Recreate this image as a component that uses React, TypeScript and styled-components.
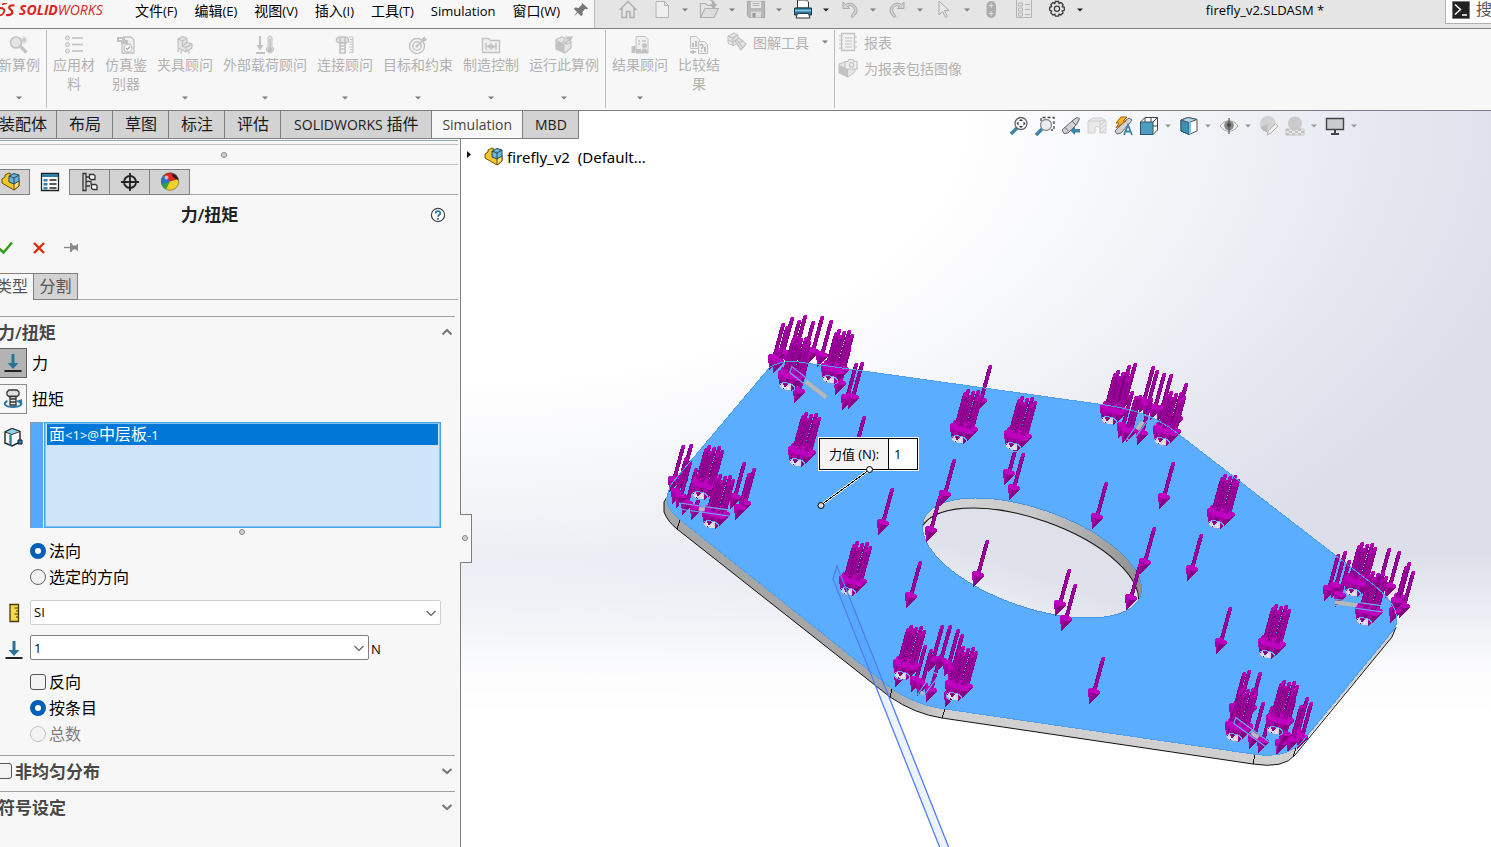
import React, { ReactNode } from "react";
import styled, { createGlobalStyle, css } from "styled-components";

const LINE = "#808080";
const FACE = "#f7f7f7";
const TAB = "#d3d3d3";

const GlobalStyle = createGlobalStyle`
  *, *::before, *::after { box-sizing: border-box; }
  body {
    margin: 0;
    font-family: "Open Sans", "Noto Sans CJK SC", sans-serif;
    font-size: 14px;
    line-height: 19px;
    color: #000;
  }
  button, input, select { font: inherit; color: inherit; }
  button { border: 0; padding: 0; background: none; }
  svg { display: block; flex: none; }
`;

const Page = styled.div`
  display: flex;
  flex-direction: column;
  min-height: 100vh;
  overflow: hidden;
`;

/* Latin runs are set slightly smaller than the Chinese text beside them */
const Latin = styled.span<{ $size?: number }>`
  font-size: ${(p) => p.$size ?? 13}px;
`;

/* ---------- title bar ---------- */

const TitleBar = styled.header`
  display: flex;
  height: 29px;
  background: #e5e5e5;
  border-bottom: 1px solid ${LINE};
`;

const MenuBar = styled.nav`
  display: flex;
  align-items: center;
  width: 595px;
  flex: none;
  padding-bottom: 7px;
  background: ${FACE};
  border-right: 1px solid #b8b8b8;
  white-space: nowrap;
`;

const Brand = styled.div`
  display: flex;
  align-items: center;
  gap: 3px;
  width: 135px;
  padding-bottom: 2px;
  color: #d9261c;
  font-style: italic;
  font-size: 14px;
`;

const MenuList = styled.div`
  display: flex;
  gap: 17px;
  flex: 1;
`;

const MenuButton = styled.button`
  line-height: 22px;
`;

const PinButton = styled.button`
  width: 21px;
  padding-bottom: 2px;
`;

const QuickBar = styled.div`
  display: flex;
  align-items: center;
  gap: 9px;
  padding: 0 0 9px 23px;
`;

const IconButton = styled.button<{ $after?: number }>`
  width: 20px;
  height: 20px;
  margin-right: ${(p) => p.$after ?? 0}px;
`;

const SplitButton = styled.div`
  display: flex;
  align-items: center;
  gap: 8px;
`;

const DropButton = styled.button`
  width: 10px;
  height: 20px;
`;

const DocTitle = styled.div`
  flex: 1;
  text-align: center;
  font-size: 13px;
  line-height: 20px;
  white-space: nowrap;
`;

const SearchBox = styled.label`
  display: flex;
  align-items: center;
  gap: 6px;
  width: 46px;
  height: 24px;
  padding: 0 0 4px 6px;
  overflow: hidden;
  background: #fff;
  border: 1px solid #b0b0b0;
  border-top: 0;
  border-right: 0;
`;

const SearchInput = styled.input`
  width: 60px;
  flex: none;
  padding: 0;
  border: 0;
  outline: 0;
  font-size: 16px;
  &::placeholder { color: #555; opacity: 1; }
`;

/* ---------- ribbon ---------- */

const Ribbon = styled.div`
  display: flex;
  height: 82px;
  padding-top: 1px;
  background: ${FACE};
  border-bottom: 1px solid ${LINE};
  color: #b2b2b2;
  overflow: hidden;
`;

const RibbonGroup = styled.div<{ $lead?: boolean; $first?: boolean }>`
  display: flex;
  gap: 10px;
  height: 78px;
  flex: none;
  padding: 0 6px;
  border-right: 1px solid #bdbdbd;
  ${(p) => p.$first && css`
    margin-left: -8px;
  `}
  ${(p) => p.$lead && css`
    padding-left: 3px;
    border-right: 0;
  `}
`;

const RibbonItem = styled.button<{ $narrow?: boolean }>`
  display: flex;
  flex-direction: column;
  align-items: center;
  width: ${(p) => (p.$narrow ? "42px" : "auto")};
  padding: 5px 0 7px;
`;

const RibbonLabel = styled.span`
  flex: 1;
`;

const RibbonStack = styled.div<{ $tight?: boolean }>`
  display: flex;
  flex-direction: column;
  gap: 6px;
  padding-top: 2px;
  ${(p) => p.$tight && css`
    margin: 0 -2px 0 -3px;
  `}
`;

const RibbonRow = styled.button`
  display: flex;
  align-items: center;
  gap: 6px;
  height: 20px;
  white-space: nowrap;
`;

const RowDrop = styled.span`
  padding-left: 5px;
`;

/* ---------- workspace ---------- */

const Workspace = styled.main`
  display: flex;
  flex-direction: column;
  flex: 1;
  background:
    linear-gradient(to bottom, rgba(255, 255, 255, 0) 60%, rgba(255, 255, 255, 0.9) 76%, #fff 82%),
    radial-gradient(ellipse 1040px 580px at 480px 0, #fff 46%, #f3f4f8 68%, #e3e6ef 90%, #dcdfea 104%, #dddfea 150%);
`;

const TabStrip = styled.div`
  display: flex;
  align-items: stretch;
  height: 28px;
`;

const CommandTab = styled.button<{ $active?: boolean; $edge?: boolean; $wide?: boolean }>`
  flex: none;
  padding: ${(p) => (p.$wide ? "0 13px" : "0 11px 0 12px")};
  background: ${(p) => (p.$active ? FACE : TAB)};
  border-right: 1px solid ${LINE};
  border-bottom: 1px solid ${LINE};
  font-size: 16px;
  color: #1a1a1a;
  white-space: nowrap;
  ${(p) => p.$edge && css`
    margin-left: -13px;
    padding-right: 9px;
  `}
  ${(p) => p.$active && css`
    padding: 0 10px;
    color: #444;
  `}
`;

const ViewBar = styled.div`
  display: flex;
  align-items: center;
  gap: 6px;
  margin-left: auto;
  padding: 2px 132px 0 0;
`;

const ViewDrop = styled(DropButton)`
  margin-left: -2px;
`;

const Body = styled.div`
  display: flex;
  flex: 1;
`;

/* ---------- property panel ---------- */

const Panel = styled.aside`
  position: relative;
  z-index: 1;
  width: 461px;
  flex: none;
  padding-top: 1px;
  background: ${FACE};
  border-right: 1px solid ${LINE};
`;

const PanelEdge = styled.div`
  height: 1px;
  margin: 0 2px 3px 0;
  background: #8fa9b5;
`;

const Grip = styled.div`
  display: flex;
  justify-content: center;
  align-items: center;
  height: 21px;
  margin-right: 2px;
  padding-right: 10px;
  border: solid #c0c0c0;
  border-width: 1px 0;
`;

const Dot = styled.span`
  width: 6px;
  height: 6px;
  border: 1px solid #8a8a8a;
  border-radius: 50%;
  background: #d0d0d0;
`;

const ManagerTabs = styled.div`
  display: flex;
  height: 26px;
  margin: 4px 2px 0 0;
`;

const ManagerTab = styled.button<{ $active?: boolean; $edge?: boolean }>`
  display: flex;
  align-items: center;
  justify-content: center;
  width: ${(p) => (p.$edge ? 30 : 40)}px;
  padding-right: ${(p) => (p.$edge ? 8 : 0)}px;
  background: ${(p) => (p.$active ? FACE : TAB)};
  border: solid ${LINE};
  border-width: ${(p) => (p.$active ? "0 1px 0 0" : "1px 1px 1px 0")};
`;

const TabFill = styled.div`
  flex: 1;
  border-bottom: 1px solid #a8a8a8;
`;

const PanelTitle = styled.div`
  display: flex;
  align-items: center;
  height: 39px;
  padding-right: 14px;
`;

const PanelName = styled.h2`
  flex: 1;
  margin: 0;
  padding-right: 11px;
  text-align: center;
  font-size: 17px;
  font-weight: 600;
  color: #222;
`;

const ActionRow = styled.div`
  display: flex;
  align-items: center;
  gap: 13px;
  height: 27px;
  margin-left: -4px;
`;

const SubTabs = styled.div`
  display: flex;
  height: 27px;
  margin: 12px 2px 16px 0;
`;

const SubTab = styled.button<{ $active?: boolean }>`
  width: ${(p) => (p.$active ? 34 : 44)}px;
  padding: 0 0 2px;
  font-size: 16px;
  line-height: 22px;
  color: #555;
  text-align: ${(p) => (p.$active ? "right" : "center")};
  background: ${(p) => (p.$active ? FACE : TAB)};
  border: solid ${LINE};
  border-width: ${(p) => (p.$active ? "1px 1px 0 0" : "1px 1px 1px 0")};
  direction: ${(p) => (p.$active ? "rtl" : "ltr")};
  padding-right: ${(p) => (p.$active ? 5 : 0)}px;
  white-space: nowrap;
`;

const Section = styled.section`
  width: 455px;
  border-top: 1px solid #a0a0a0;
`;

const SectionHead = styled.div<{ $after?: number }>`
  display: flex;
  align-items: center;
  justify-content: space-between;
  height: 30px;
  margin-bottom: ${(p) => p.$after ?? 0}px;
  padding-right: 2px;
  overflow: hidden;
`;

const SectionName = styled.label<{ $shift?: number }>`
  display: flex;
  align-items: center;
  gap: 3px;
  margin-left: ${(p) => -(p.$shift ?? 2)}px;
  font-size: 17px;
  font-weight: 600;
  color: #484848;
`;

const ModeRow = styled.label`
  display: flex;
  align-items: center;
  gap: 5px;
  height: 30px;
  margin: 1px 0 6px;
  font-size: 16px;
  line-height: 22px;
`;

const ModeButton = styled.button<{ $on?: boolean }>`
  display: flex;
  align-items: center;
  width: 27px;
  height: 30px;
  padding-left: 3px;
  background: ${(p) => (p.$on ? "#b3b3b3" : FACE)};
  border: 1px solid ${(p) => (p.$on ? "#606060" : "#8c8c8c")};
  border-left: 0;
`;

const SelectionRow = styled.div`
  display: flex;
  height: 106px;
  margin-top: 8px;
  padding-right: 14px;
`;

const SideIcon = styled.span`
  display: flex;
  width: 30px;
  flex: none;
  padding: 5px 0 0 3px;
`;

const ColorBar = styled.span`
  width: 14px;
  background: #54a8ff;
  border: solid #8c9aa8;
  border-width: 1px 0 0 1px;
  border-right: 1px solid #fff;
`;

const SelectionList = styled.ul`
  flex: 1;
  margin: 0;
  padding: 1px;
  list-style: none;
  background: #cfe4f8;
  border: 1px solid #3fa5e3;
  box-shadow: inset 0 0 0 1px #86c2f0;
`;

const SelectionItem = styled.li`
  height: 21px;
  margin: 0 1px;
  padding-left: 2px;
  background: #0078d7;
  color: #fff;
  font-size: 16px;
  line-height: 20px;
`;

const ListGrip = styled.div`
  display: flex;
  justify-content: center;
  height: 10px;
  padding: 1px 0 0 28px;
`;

const Choice = styled.label<{ $muted?: boolean }>`
  display: flex;
  align-items: center;
  gap: 3px;
  height: 26px;
  padding-left: 30px;
  font-size: 16px;
  color: ${(p) => (p.$muted ? "#7d7d7d" : "#000")};
`;

const Radio = styled.input.attrs({ type: "radio" })`
  appearance: none;
  width: 16px;
  height: 16px;
  margin: 0;
  border: 1px solid #666;
  border-radius: 50%;
  background: #f3f3f3;
  &:checked { border: 5px solid #005fb8; background: #fff; }
  &:disabled { border-color: #c4c4c4; }
`;

const Check = styled.input.attrs({ type: "checkbox" })`
  appearance: none;
  width: 16px;
  height: 16px;
  margin: 0;
  border: 1px solid #555;
  border-radius: 3px;
  background: #f3f3f3;
`;

const FieldRow = styled.div`
  display: flex;
  align-items: center;
  height: 25px;
  margin-top: 10px;
  padding-right: 14px;
`;

const FieldIcon = styled.span<{ $drop?: number }>`
  display: flex;
  width: 30px;
  flex: none;
  padding: ${(p) => p.$drop ?? 0}px 0 0 4px;
`;

const Combo = styled.div<{ $strong?: boolean }>`
  display: grid;
  align-items: center;
  flex: 1;
  height: 25px;
  background: #fff;
  border: 1px solid ${(p) => (p.$strong ? "#808080" : "#d0d0d0")};
  border-radius: 2px;
  > * { grid-area: 1 / 1; }
  > svg { justify-self: end; margin-right: 3px; pointer-events: none; }
`;

const fieldText = css`
  width: 100%;
  height: 22px;
  padding: 0 3px;
  border: 0;
  outline: 0;
  background: transparent;
  appearance: none;
  font-size: 13px;
`;

const UnitSelect = styled.select`${fieldText}`;
const ValueInput = styled.input`${fieldText}`;

const Unit = styled.span`
  width: 72px;
  padding: 4px 0 0 2px;
  font-size: 13px;
`;

const ChoiceGroup = styled.div`
  margin: 9px 0 8px;
`;

const PanelHandle = styled.button`
  position: absolute;
  left: 460px;
  top: 375px;
  display: flex;
  align-items: center;
  justify-content: center;
  width: 12px;
  height: 49px;
  padding: 0 2px 2px 0;
  background: ${FACE};
  border: 1px solid ${LINE};
  border-left: 0;
`;

/* ---------- graphics area ---------- */

const Viewport = styled.div`
  position: relative;
  flex: 1;
  min-width: 0;
  overflow: hidden;
`;

const Scene = styled.svg`
  position: absolute;
  left: 0;
  top: 0;
`;

const TreeRoot = styled.button`
  position: relative;
  display: flex;
  align-items: center;
  gap: 3px;
  padding: 7px 0 0 4px;
  font-family: "Noto Sans", sans-serif;
  font-size: 15px;
  line-height: 22px;
  white-space: pre;
`;

const Callout = styled.label`
  position: absolute;
  left: 358px;
  top: 299px;
  display: flex;
  width: 99px;
  height: 32px;
  border: 1px solid #000;
  outline: 1px solid #fff;
  background: #f4f4f4;
  font-size: 13px;
  line-height: 31px;
`;

const CalloutName = styled.span`
  width: 69px;
  text-align: center;
  border-right: 1px solid #000;
  white-space: nowrap;
`;

const CalloutValue = styled.input`
  width: 28px;
  padding: 0 0 0 5px;
  border: 0;
  outline: 0;
  background: #fff;
`;

const LeaderKnob = styled.span`
  position: absolute;
  left: 46px;
  bottom: -4px;
  width: 7px;
  height: 7px;
  border: 1px solid #000;
  border-radius: 50%;
  background: #eee;
`;

/* ---------- icons ---------- */

const Icon = ({ children, size = 20 }: { children: ReactNode; size?: number }) => (
  <svg width={size} height={size} viewBox="0 0 20 20" fill="none" aria-hidden="true">
    {children}
  </svg>
);

const Caret = ({ color = "#7d7d7d" }: { color?: string }) => (
  <svg width="10" height="6" viewBox="0 0 10 6" aria-hidden="true">
    <path d="M2 1.500h6L5 4.500z" fill={color} />
  </svg>
);

const Chevron = ({ up, thin }: { up?: boolean; thin?: boolean }) => (
  <svg width="12" height="12" viewBox="0 0 12 12" fill="none" aria-hidden="true">
    <path
      d={up ? "M1.500 8.500 6 4l4.500 4.500" : thin ? "M1.500 4 6 8.500 10.500 4" : "M1.500 4 6 8l4.500-4"}
      stroke={thin ? "#606060" : "#7a7a7a"}
      strokeWidth={thin ? 1.2 : 2.2}
    />
  </svg>
);

const G = "#c2c2c2";
const L = "#e4e4e4";

const StudyIcon = () => (
  <Icon>
    <path d="M11.500 11.500 17.500 17.500" stroke={G} strokeWidth="3.200" />
    <circle cx="7" cy="7.500" r="5.500" fill={L} stroke={G} strokeWidth="1.600" />
    <path d="M15 1v8M11.500 5h7M12.500 2.500l5 5M17.500 2.500l-5 5" stroke={G} />
  </Icon>
);
const MaterialIcon = () => (
  <Icon>
    {[3, 9.5, 16].map((y) => (
      <g key={y}>
        <circle cx="3.500" cy={y} r="2" fill={L} stroke={G} />
        <path d={`M8 ${y}h11`} stroke={G} strokeWidth="1.600" />
      </g>
    ))}
  </Icon>
);
const EvaluatorIcon = () => (
  <Icon>
    <path d="M7 2h8l3 3v13H6V9" stroke={G} strokeWidth="1.300" fill="#efefef" />
    <path d="M1 2h8v3h3v4H5V7H1z" fill={G} />
    <path d="M3 4h3v1H3z" fill="#fff" />
    <circle cx="12" cy="13" r="4" fill="#fff" stroke={G} strokeWidth="1.300" />
    <path d="m10 13 1.500 1.500L14 11.500" stroke="#aaa" strokeWidth="1.300" />
  </Icon>
);
const FixtureIcon = () => (
  <Icon>
    <path d="M3 4 7.500 1.500 12 3.500v4L17 9v4l-6 4-8-4z" fill={L} stroke={G} strokeWidth="1.200" />
    <path d="M3 4l4.500 2v5l3.500 1.500L17 9M7.500 6 12 3.500M11 12.500V17M7.500 11 12 7.500" stroke={G} strokeWidth="1.200" />
    <path d="M3 14v3M6 15.500v3M14 16v2.500" stroke={G} strokeWidth="1.500" />
  </Icon>
);
const LoadIcon = () => (
  <Icon>
    <path d="M5 1v12M1 18h9" stroke={G} strokeWidth="2" />
    <path d="M1.500 10h7L5 15.500z" fill={G} />
    <path d="M13 3a2 2 0 0 1 4 0v8.500a3.500 3.500 0 1 1-4 0z" fill={L} stroke={G} />
    <circle cx="15" cy="14.500" r="2.600" fill={G} />
    <path d="M15 4v9" stroke={G} strokeWidth="1.500" />
  </Icon>
);
const BoltIcon = () => (
  <Icon>
    <path d="M1.500 3.500 4 2h7l2.500 1.500v3L11 8H4L1.500 6.500z" fill={L} stroke={G} strokeWidth="1.300" />
    <path d="M5 8h5v10H5zM5 11h5M5 14h5M5 2v5M10 2v5" stroke={G} strokeWidth="1.600" />
    <path d="M14 2h4M15 4.500h3M14 7h4M15 9.500h3M14 12h4M15 14.500h3M14 17h4" stroke={G} />
    <path d="M18 2v16" stroke={G} />
  </Icon>
);
const TargetIcon = () => (
  <Icon>
    <circle cx="9" cy="11" r="7.500" stroke={G} strokeWidth="1.500" />
    <circle cx="9" cy="11" r="4.200" stroke={G} strokeWidth="1.500" />
    <circle cx="9" cy="11" r="1.600" fill={G} />
    <path d="M9 11 16 4" stroke={G} strokeWidth="1.600" />
    <path d="M14 3.500 17 1v2.500h2.500L17 6.500h-3z" fill={G} />
  </Icon>
);
const ControlIcon = () => (
  <Icon>
    <path d="M1.500 17.500v-14h6l2 2h9v12z" fill="#f0f0f0" stroke={G} strokeWidth="1.400" />
    <path d="M5 8v7M15 8v7M5 11.500h10M10 8v7" stroke={G} strokeWidth="1.500" />
    <path d="M6 11.500 9 9v5zM14 11.500 11 9v5z" fill={G} />
  </Icon>
);
const RunIcon = () => (
  <Icon>
    <path d="M2 4.500 8 2l4 2-3 3 4 2 4-2v6l-6 5-9-4z" fill={L} stroke={G} strokeWidth="1.200" />
    <path d="M2 5l8.500 4v9L2 14z" fill={G} />
    <path d="M11 1.500h8l-3 6z" fill={G} />
    <path d="M16 4 11 8" stroke={G} strokeWidth="2" />
  </Icon>
);
const ResultIcon = () => (
  <Icon>
    <path d="M6 1.500h9l3 3V18H6z" fill="#f0f0f0" stroke={G} />
    <path d="M1.500 11h4v7h-4zM6 14h5v4H6z" fill={G} />
    <path d="M8 6h2M12 6h4M8 9h2" stroke={G} strokeWidth="1.500" />
    <circle cx="14.500" cy="10.500" r="2.500" fill={G} />
    <path d="M11 18c0-6 7-6 7 0z" fill={G} />
  </Icon>
);
const CompareIcon = () => (
  <Icon>
    <path d="M1.500 1.500h6l3 3v9h-9z" fill="#f0f0f0" stroke={G} />
    <path d="M9.500 6.500h6l3 3v9h-9z" fill="#f0f0f0" stroke={G} />
    <path d="M3 8h2v4H3zM6 6h2v6H6zM15 12h2v5h-2z" fill={G} />
    <path d="M11 11c0-2 3-2 3 0s-1.500 1.500-1.500 3M12.500 15.500v1.500M1 17h6M4 15v4" stroke="#b4b4b4" strokeWidth="1.300" />
  </Icon>
);
const PlotIcon = () => (
  <Icon>
    <path d="M1 4 7 1l4 2v8l-5 3-5-3z" fill={L} stroke={G} />
    <path d="M6 6v8M1 4l5 2 5-3M1 8l5 2 5-3" stroke={G} strokeWidth="1.300" />
    <path d="m8 9 4-3 7 6-5 6z" fill={L} stroke={G} strokeWidth="1.300" />
    <path d="m10 8 6 8M12 11l4-3" stroke={G} strokeWidth="1.300" />
  </Icon>
);
const ReportIcon = () => (
  <Icon>
    <path d="M3.500 1.500h13v17h-13z" fill="#f2f2f2" stroke={G} strokeWidth="1.300" />
    <path d="M7 6h7M7 9h7M7 12h7M7 15h7M1 4h4M1 8h4M1 12h4M1 16h4M17 5h2M17 10h2M17 15h2" stroke={G} strokeWidth="1.200" />
  </Icon>
);
const ReportImageIcon = () => (
  <Icon>
    <path d="M1 6l6-2 10 3v7l-7 5-9-4z" fill={L} stroke={G} />
    <path d="M1 7l9 4v8l-9-4z" fill={G} />
    <path d="M7 3.500h3l1-2h4l1 2h3V11H7z" fill="#efefef" stroke={G} strokeWidth="1.200" />
    <circle cx="13.500" cy="6.800" r="2.200" stroke={G} strokeWidth="1.200" />
  </Icon>
);

const HomeIcon = () => (
  <Icon>
    <path d="M1.500 10 10 1.500 18.500 10M4 8v9.500h4.500v-6h3.500v6H16V8" stroke="#b0b0b0" strokeWidth="1.500" />
  </Icon>
);
const NewIcon = () => (
  <Icon>
    <path d="M4 1.500h8.500l4 4V17.500H4z" fill="#eee" stroke="#b4b4b4" />
    <path d="M12.500 1.500v4h4" stroke="#b4b4b4" />
  </Icon>
);
const OpenIcon = () => (
  <Icon>
    <path d="M1.500 17.500V3.500h5l2 2h7V9" stroke="#b0b0b0" strokeWidth="1.200" />
    <path d="M1.500 17.500 6 8.500h13.500L15 17.500z" fill="#ddd" stroke="#b0b0b0" strokeWidth="1.200" />
    <path d="M9 0c3 0 4 1 4 4h-2.500l4 5 4-5H16c0-3-3-5-7-4z" fill="#b0b0b0" />
  </Icon>
);
const SaveIcon = () => (
  <Icon>
    <path d="M1.500 1.500h17v16h-15l-2-2z" fill="#b8b8b8" stroke="#a4a4a4" />
    <path d="M5 1.500h10V8H5z" fill="#e8e8e8" />
    <path d="M6.500 3.500h7M6.500 5.500h7" stroke="#b0b0b0" />
    <path d="M5 11.500h10v6H5z" fill="#dcdcdc" />
    <path d="M6.500 13h3v4.500h-3z" fill="#999" />
  </Icon>
);
const PrintIcon = () => (
  <Icon>
    <path d="M4.500 8V0h9l2 2v6z" fill="#fff" stroke="#333" />
    <path d="M1.500 8h17v7h-17z" fill="#2b7ba3" stroke="#12384d" />
    <path d="M2 10.500h16" stroke="#8fd0ea" strokeWidth="1.500" />
    <path d="M4.500 13.500h11L17 18H3z" fill="#fff" stroke="#333" />
  </Icon>
);
const UndoIcon = ({ flip }: { flip?: boolean }) => (
  <Icon>
    <g transform={flip ? "matrix(-1 0 0 1 20 0)" : undefined}>
      <path d="M3 2v6.500h6.500L7.500 6.500c4-2.500 8 1 6.500 5.500l-3 4.500 2 1 3.500-4.500C19 6 11 .5 5.500 4.500z" fill="#d2d2d2" stroke="#aaa" />
    </g>
  </Icon>
);
const CursorIcon = () => (
  <Icon>
    <path d="M5 1v14l3.500-3.500 3 6 2-1-3-6H15z" fill="#e8e8e8" stroke="#aaa" />
  </Icon>
);
const RebuildIcon = () => (
  <Icon>
    <rect x="5.500" y="1" width="9.500" height="17" rx="4.700" fill="#ababab" />
    <path d="M10.200 3v5M8 5.500h4.500M10.200 11v5M8 13.500h4.500" stroke="#ddd" />
  </Icon>
);
const OptionsListIcon = () => (
  <Icon>
    <path d="M2.500 0v17.500h15V0" stroke="#b4b4b4" />
    <path d="M4.500 3h4v3h-4zM4.500 8h4v3h-4zM4.500 13h4v3h-4zM11 4.500h5M11 9.500h5M11 14.500h5" stroke="#b4b4b4" />
  </Icon>
);
const GearIcon = () => (
  <Icon>
    <path d="M8.500 1.500h3l.6 2 1.900-.9 2.100 2.100-.9 1.900 2.100.7v3l-2.100.7.9 1.900-2.100 2.100-1.900-.9-.6 2.100h-3l-.7-2.100-1.900.9-2.100-2.100.9-1.900-2-.7v-3l2-.7-.9-1.900 2.100-2.100 1.900.9z" stroke="#3a3a3a" strokeWidth="1.300" />
    <circle cx="10" cy="8.800" r="2.600" stroke="#3a3a3a" strokeWidth="1.200" />
  </Icon>
);
const PinIcon = () => (
  <Icon size={16}>
    <path d="M11 1l8 7-2 1-2-.5-3 4 0 4-2 1-4-4-5 5 4-6-4-4 2-1.500 4 .5 4-4z" fill="#777" />
  </Icon>
);
const PromptIcon = () => (
  <svg width="18" height="18" viewBox="0 0 18 18" fill="none" aria-hidden="true">
    <path d="M.5.5h17v17H.5z" fill="#222" stroke="#777" />
    <path d="m3 3.500 5.500 5L3 13.500M10 14h5" stroke="#fff" strokeWidth="1.500" />
  </svg>
);
const BrandMark = () => (
  <svg width="16" height="14" viewBox="0 0 16 14" fill="none" aria-hidden="true">
    <path d="M0 5c4 0 5 1.500 4 4s-3 3.500-5 3.500M2 1.500l5-1.500" stroke="#d9261c" strokeWidth="1.800" />
    <path d="M14.500 2.500c-4-.5-6 .5-5 3l2.500 2.500c1.500 3-2 4.500-6 4" stroke="#d9261c" strokeWidth="2.200" />
  </svg>
);

const PartIcon = () => (
  <Icon>
    <path d="M1 7l3-2V3l4-2 2 1v5l8 2v5l-5 4-12-7z" fill="#f4c72c" stroke="#6b4d06" />
    <path d="M13 11v7l5-4V8z" fill="#fbe27a" stroke="#6b4d06" />
    <path d="M8 4l5-2.500 5 1.500v6l-5 3-5-2z" fill="#6fb3d4" stroke="#1e4a61" />
    <path d="M8 4l5 2 5-3M13 6v6" stroke="#1e4a61" />
  </Icon>
);
const PropertyIcon = () => (
  <Icon>
    <path d="M1.500 1.500h17v17h-17z" fill="#fff" stroke="#222" strokeWidth="1.300" />
    <path d="M2 2h16v3H2z" fill="#2d7fa8" />
    <path d="M3.500 7h4v2.500h-4zM3.500 11h4v2.500h-4zM3.500 15h4v2.500h-4z" fill="#2d7fa8" />
    <path d="M9.500 8h7M9.500 12h7M9.500 16h7" stroke="#222" strokeWidth="1.300" />
  </Icon>
);
const ConfigIcon = () => (
  <Icon>
    <path d="M3 1.500h3v17H3zM6 5h4M6 14h4" stroke="#333" strokeWidth="1.300" />
    <path d="M9.500 2.500h4l1.500 1v4h-4l-1.500-1zM11.500 12.500h4l1.500 1v4h-4l-1.500-1zM6 9.500h5v3" fill="#fff" stroke="#333" strokeWidth="1.300" />
  </Icon>
);
const DimIcon = () => (
  <Icon>
    <circle cx="10" cy="10" r="6" stroke="#222" strokeWidth="1.800" />
    <path d="M10 1v18M1 10h18" stroke="#222" strokeWidth="1.800" />
  </Icon>
);
const AppearanceIcon = () => (
  <Icon>
    <circle cx="10" cy="9.500" r="9" fill="#2f9e44" />
    <path d="M10 9.500 1.500 12A9 9 0 0 1 4 3z" fill="#2c6fd1" />
    <path d="M10 9.500 4 3a9 9 0 0 1 14.500 4z" fill="#e12626" />
    <path d="M10 9.500 18.500 7c1 4-.5 8-3 9.500-3 2.500-7 2.500-9.500 1z" fill="#f2cf2b" />
    <path d="M12 1.500c4 1 6.500 4 6.500 7L13 5z" fill="#222" />
    <circle cx="6.500" cy="5.500" r="2" fill="#fff" opacity=".6" />
    <circle cx="10" cy="9.500" r="8.700" stroke="#555" strokeOpacity=".5" />
  </Icon>
);
const HelpIcon = () => (
  <svg width="16" height="16" viewBox="0 0 16 16" fill="none" aria-hidden="true">
    <circle cx="8" cy="8" r="6.600" fill="#fff" stroke="#444" strokeWidth="1.200" />
    <path d="M5.700 6.500C5.700 3.500 10.300 3.500 10.300 6.300 10.300 8 8 8 8 9.800M8 11v1.700" stroke="#2478a3" strokeWidth="1.800" />
  </svg>
);
const OkIcon = () => (
  <Icon>
    <path d="M2.500 10 7.500 14.500 16 4.500" stroke="#2f9a17" strokeWidth="2.400" />
  </Icon>
);
const CancelIcon = () => (
  <Icon>
    <path d="M5 5 15 15M15 5 5 15" stroke="#e02a10" strokeWidth="2.400" />
  </Icon>
);
const KeepIcon = () => (
  <Icon>
    <path d="M2 9.500h8" stroke="#8a8a8a" strokeWidth="1.400" />
    <path d="M8 5h1.500l1.500 2.500h3L16 5.500v8l-2-2h-3L9.500 14H8z" fill="#8a8a8a" />
  </Icon>
);
const ForceIcon = () => (
  <Icon>
    <path d="M10 1v11" stroke="#2a7596" strokeWidth="3" />
    <path d="M4.500 10h11L10 16z" fill="#2a7596" />
    <path d="M1.500 18h17" stroke="#222" strokeWidth="2" />
  </Icon>
);
const TorqueIcon = () => (
  <Icon>
    <path d="M4.500 12c-5 2-3 6 5.500 6s10-3.500 7-6" stroke="#2a7ba3" strokeWidth="2" />
    <path d="M13 12l6-2v6z" fill="#2a7ba3" />
    <path d="M4 3l2-2h8l2 2v3l-2 1.500H6L4 6z" fill="#ddd" stroke="#333" strokeWidth="1.300" />
    <path d="M7 7.500h6V16H7zM7 10h6M7 13h6" fill="#eee" stroke="#333" strokeWidth="1.300" />
  </Icon>
);
const FaceIcon = () => (
  <Icon>
    <path d="M2 5 9 1.500l8 3V15l-8 4-7-3z" fill="#fff" stroke="#222" strokeWidth="1.400" />
    <path d="M2 5l7 2.500 8-3L9 1.500z" fill="#8fd3ea" stroke="#333" />
    <path d="M7.500 7.500v11" stroke="#2a7ba3" strokeWidth="2.400" />
    <path d="M15 13h4v4h-4z" fill="#2a7ba3" stroke="#123" />
  </Icon>
);
const RulerIcon = () => (
  <Icon>
    <path d="M6 1.500h8.500v17H6z" fill="#f5d94e" stroke="#4a3a08" strokeWidth="1.300" />
    <path d="M10.500 5h4M12 8h2.500M10.500 11h4M12 14h2.500" stroke="#4a3a08" />
  </Icon>
);

const ZoomFitIcon = () => (
  <Icon>
    <path d="m2 18 6-6" stroke="#3f84a6" strokeWidth="3.500" />
    <circle cx="12" cy="7.500" r="6" fill="#f4f6f8" stroke="#666" strokeWidth="1.300" />
    <path d="M12 3l2 2h-4zM12 12l2-2h-4zM7.500 7.500l2-2v4zM16.500 7.500l-2-2v4z" fill="#333" />
  </Icon>
);
const ZoomAreaIcon = () => (
  <Icon>
    <path d="M6 5V1.500h13V14h-3" stroke="#444" strokeDasharray="3 2" strokeWidth="1.300" />
    <path d="m1 19 6-6" stroke="#3f84a6" strokeWidth="3.500" />
    <circle cx="11" cy="9" r="5.500" fill="#e9eef2" stroke="#888" strokeWidth="1.300" />
  </Icon>
);
const PreviousViewIcon = () => (
  <Icon>
    <path d="M1 14 11 5l5-3.500 2.500 1L16 8l-9 9-4 .5z" fill="#d2d2d2" stroke="#666" />
    <path d="m11 5 4 4M4 11.500l4 4" stroke="#666" />
    <path d="m9 14.500 5-4V13h5v3.500h-5V19z" fill="#3f84a6" />
  </Icon>
);
const SectionIcon = () => (
  <Icon>
    <path d="M1 5 6 2h9l4 3v12h-6v-5c-2-2-4-2-5 0v5H1z" fill="#e9e9e9" stroke="#cfcfcf" />
    <path d="M1 5h12v12M13 5l6-1M14 9l4-4M14 13l4-4M14 17l4-4" stroke="#cfcfcf" />
  </Icon>
);
const DynamicIcon = () => (
  <Icon>
    <path d="M2 15 11 6l5-4 3 2-3 4-8 9-4 1z" fill="#d2d2d2" stroke="#666" />
    <path d="M8 1h6l-4 4h3L3 12l3-5H3z" fill="#f7b32b" stroke="#a85b0b" />
    <path d="m11 19 4-10 4 10M12.500 15.500h5" stroke="#3f84a6" strokeWidth="1.800" />
  </Icon>
);
const OrientIcon = () => (
  <Icon>
    <path d="M6 1.500h12.500V14L14 18.500H1.500V6z" fill="#fff" stroke="#444" />
    <path d="M6 1.500V6M18.500 1.500 14 6M12 1.500V6M14 10h4.500" stroke="#444" />
    <path d="M1.500 6H14v12.500H1.500z" fill="#4e9cc0" stroke="#28566c" />
  </Icon>
);
const DisplayIcon = () => (
  <Icon>
    <path d="M2 4 9 1.500l9 2V15l-8 3.500L2 15z" fill="#fff" stroke="#555" />
    <path d="M2 4l8 2.500v12L2 15z" fill="#3f8fb5" stroke="#28566c" />
    <path d="M2 4l7-2.500 9 2-8 3z" fill="#a7dcf0" stroke="#555" />
    <path d="M10 6.500 12 6v11.500l-2 1z" fill="#7fc4e0" />
  </Icon>
);
const EyeIcon = () => (
  <Icon>
    <path d="M1 10c5-7 13-7 18 0-5 7-13 7-18 0z" fill="#eee" stroke="#aaa" />
    <circle cx="10" cy="9.500" r="4.800" fill="#888" />
    <circle cx="10" cy="9" r="2" fill="#444" />
    <path d="M10 2v16" stroke="#555" strokeWidth="1.200" />
  </Icon>
);
const EditAppearanceIcon = () => (
  <Icon>
    <circle cx="9" cy="8" r="8" fill="#d2d2d2" />
    <path d="M9 8 1.500 11A8 8 0 0 0 8 16z" fill="#bdbdbd" />
    <path d="m8 19 1.500-4.500 7-7L19 10l-7 7z" fill="#eee" stroke="#b0b0b0" />
  </Icon>
);
const SceneIcon = () => (
  <Icon>
    <path d="M1 13h18v6H1z" fill="#eee" stroke="#c4c4c4" />
    <path d="M1 13h3v2H1zM7 13h3v2H7zM13 13h3v2h-3zM4 15h3v2H4zM10 15h3v2h-3zM16 15h3v2h-3zM1 17h3v2H1zM7 17h3v2H7zM13 17h3v2h-3z" fill="#bdbdbd" />
    <circle cx="10" cy="7.500" r="7" fill="#cacaca" />
  </Icon>
);
const MonitorIcon = () => (
  <Icon>
    <path d="M1.500 2.500h17v11h-17z" fill="#c9ccce" stroke="#444" strokeWidth="1.400" />
    <path d="M10 14v4M6 18h8" stroke="#444" strokeWidth="2" />
  </Icon>
);

/* ---------- model ---------- */

type Point = [number, number];

/* A load arrow; x, y is the tip of its head */
const Arrow = ({ x, y }: { x: number; y: number }) => (
  <g transform={`translate(${x} ${y + 1})`}>
    <path d="M5-12 14-45" stroke="#820082" strokeWidth="4" />
    <path d="M5-12 14-45" stroke="#a000a0" strokeWidth="2" />
    <path d="M-1-15 11-11 0 0z" fill="#86007f" />
    <path d="M-1-15 4-13 0 0z" fill="#a800a8" />
    <ellipse cx="5" cy="-13" rx="6.300" ry="2.600" transform="rotate(16 5 -13)" fill="#c000c0" />
    <circle cx="14" cy="-45" r="2" fill="#b400b4" />
  </g>
);

const RING: Point[] = [[-5, -4], [5, -3], [-8, -1], [0, -2], [8, 1], [-4, 2], [4, 4]];

/* Arrows that stand round the rim of a bolt hole centred at x, y */
const HoleLoad = ({ x, y }: { x: number; y: number }) => (
  <g>
    <ellipse cx={x} cy={y} rx="8" ry="4" transform={`rotate(12 ${x} ${y})`} fill="#d4d4da" />
    {RING.map(([dx, dy]) => (
      <Arrow key={`${dx},${dy}`} x={x + dx} y={y + dy} />
    ))}
    <path
      d={`M${x + 2} ${y - 14}l8-28M${x + 7} ${y - 12}l8-28`}
      stroke="#5c0060"
      strokeDasharray="1 3"
    />
    <path d={`M${x - 5} ${y + 2}l2-4 1 5zM${x} ${y + 3}l1-4 2 5z`} fill="#e6e6ec" />
    <ellipse cx={x} cy={y + 1} rx="8" ry="4" transform={`rotate(12 ${x} ${y + 1})`} fill="none" stroke="#67abf0" />
  </g>
);

const SINGLE: Point[] = [
  [976, 411], [850, 462], [842, 409], [848, 408], [878, 534], [940, 505], [926, 541], [906, 607], [973, 586],
  [1004, 484], [1009, 499], [1092, 528], [1159, 508], [1140, 573], [1187, 580], [1055, 615], [1061, 630],
  [1126, 609], [1089, 703], [1216, 653],
];

const EDGE: Point[] = [
  [769, 369], [778, 363], [785, 366], [791, 361], [799, 367], [808, 362], [817, 366], [773, 372],
  [669, 491], [677, 490], [672, 503], [682, 514], [691, 519], [730, 508], [740, 514], [735, 519], [676, 507],
  [1121, 409], [1115, 411], [1139, 412], [1143, 416], [1150, 419], [1157, 420], [1172, 429], [1168, 442],
  [1118, 437], [1126, 441], [1122, 442], [1137, 444],
  [1324, 600], [1331, 597], [1335, 606], [1375, 594], [1385, 597], [1395, 608], [1399, 617], [1390, 622], [1392, 612],
  [1230, 718], [1235, 716], [1246, 718], [1242, 736], [1249, 748], [1258, 752], [1293, 743], [1297, 748],
  [1287, 751], [1276, 754], [1280, 745],
  [928, 671], [936, 671], [944, 675], [948, 680], [911, 691], [917, 695], [926, 701], [898, 674], [895, 686], [945, 706],
];

const HOLES: Point[] = [
  [830, 379], [787, 386], [797, 462], [700, 495], [711, 524], [959, 439], [1013, 446], [1109, 420], [1162, 441],
  [1216, 524], [1353, 592], [1364, 621], [1267, 654], [1234, 737], [1275, 730], [848, 591], [902, 675], [954, 696],
];

const EXTRA_TIPS: Point[] = [[794, 402], [835, 394]];

const SLOTS: { x: number; y: number; length: number; angle: number; from: number; to: number }[] = [
  { x: 790, y: 369, length: 48, angle: 38, from: 20, to: 46 },
  { x: 679, y: 506, length: 53, angle: 8, from: 20, to: 26 },
  { x: 1333, y: 602, length: 53, angle: 8, from: 2, to: 24 },
  { x: 1234, y: 720, length: 50, angle: 36, from: 22, to: 30 },
  { x: 1129, y: 441, length: 30, angle: -54, from: 14, to: 24 },
  { x: 920, y: 696, length: 27, angle: -54, from: 2, to: 5 },
];

const TOP_FACE =
  "M770 367Q782 360 799 362L1105 405Q1150 411 1177 433L1370 582Q1404 608 1395 628L1306 737Q1290 760 1253 754L945 709Q915 705 891 688L678 518Q666 508 667 497Q669 487 673 482Z";

const Model = () => (
  <Scene width="1030" height="708" viewBox="461 139 1030 708" fill="none" shapeRendering="crispEdges" aria-hidden="true">
    <defs>
      <linearGradient id="corner" x1="890" y1="0" x2="945" y2="0" gradientUnits="userSpaceOnUse">
        <stop offset="0" stopColor="#a6a6a6" />
        <stop offset="1" stopColor="#cfcfcf" />
      </linearGradient>
      <linearGradient id="wall" x1="930" y1="0" x2="1140" y2="0" gradientUnits="userSpaceOnUse">
        <stop offset="0" stopColor="#d6d6d6" />
        <stop offset=".5" stopColor="#c8c8c8" />
        <stop offset="1" stopColor="#909090" />
      </linearGradient>
      <linearGradient id="through" x1="0" y1="500" x2="0" y2="620" gradientUnits="userSpaceOnUse">
        <stop offset="0" stopColor="#dddfea" />
        <stop offset=".6" stopColor="#dfe1eb" />
        <stop offset="1" stopColor="#eceef4" />
      </linearGradient>
      <clipPath id="bore">
        <ellipse cx="1032" cy="558" rx="114.800" ry="49.200" transform="rotate(19.350 1032 558)" />
      </clipPath>
    </defs>

    <path d="M667 497 664 502V512Q668 522 677 529L890 697 892 688 678 518z" fill="#a6a6a6" />
    <path d="M891 688 890 697Q915 714 942 718L945 709Q915 705 891 688z" fill="url(#corner)" />
    <path d="M945 709 942 718 1253 764Q1284 769 1293 755L1392 637 1396 627 1306 737 1253 754z" fill="#d0d0d0" />
    <path d="M667 497 664 502V512Q668 522 677 529L890 697Q915 714 942 718L1253 764Q1284 769 1295 755L1392 637 1396 627" stroke="#111" shapeRendering="auto" />
    <path d="M680 520 677 529M892 689 890 697M945 709 942 718M1255 755 1253 764M1296 748 1293 757" stroke="#111" />
    <path d={TOP_FACE} fill="#5badff" stroke="#4793e0" />

    <g clipPath="url(#bore)">
      <path d="M900 480h260v150H900z" fill="url(#wall)" />
      <ellipse cx="1029" cy="568" rx="114.800" ry="49.200" transform="rotate(19.350 1029 568)" fill="url(#through)" stroke="#111" shapeRendering="auto" />
    </g>
    <ellipse cx="1032" cy="558" rx="114.800" ry="49.200" transform="rotate(19.350 1032 558)" stroke="#4793e0" />

    {EXTRA_TIPS.map(([x, y]) => <Arrow key={`${x},${y}`} x={x} y={y} />)}
    {EDGE.map(([x, y]) => <Arrow key={`${x},${y}`} x={x} y={y} />)}
    {SINGLE.map(([x, y]) => <Arrow key={`${x},${y}`} x={x} y={y} />)}
    {HOLES.map(([x, y]) => <HoleLoad key={`${x},${y}`} x={x} y={y} />)}

    <path d={TOP_FACE} stroke="#4f9ff0" />
    {SLOTS.map((s) => (
      <g key={s.x} transform={`translate(${s.x} ${s.y}) rotate(${s.angle})`} shapeRendering="auto">
        <path d={`M${s.from}-2H${s.to}V2H${s.from}z`} fill="#b8b8b8" />
        <path d={`M0-3H${s.length}L${s.length + 2} 3H2z`} stroke="#67abf0" strokeWidth="1.200" />
      </g>
    ))}

    <path d="M837 566 833 579 940 847H949z" fill="#5082ff" fillOpacity=".1" shapeRendering="auto" />
    <path d="M940 848 833 579 837 566 949 848" stroke="#4f7ff0" strokeWidth="1.300" shapeRendering="auto" />

    <path d="M869 470 821 505" stroke="#fff" strokeWidth="2.500" />
    <path d="M869 470 821 505" stroke="#000" strokeWidth="1" />
    <circle cx="821" cy="505.500" r="3" fill="#ddd" stroke="#000" shapeRendering="auto" />
  </Scene>
);

/* ---------- data ---------- */

const MENUS: [string, string][] = [
  ["文件", "(F)"], ["编辑", "(E)"], ["视图", "(V)"], ["插入", "(I)"], ["工具", "(T)"], ["", "Simulation"], ["窗口", "(W)"],
];

type Tool = { label: string; icon: ReactNode; narrow?: boolean; drop?: boolean };

const ADVISORS: Tool[] = [
  { label: "应用材料", icon: <MaterialIcon />, narrow: true },
  { label: "仿真鉴别器", icon: <EvaluatorIcon />, narrow: true },
  { label: "夹具顾问", icon: <FixtureIcon />, drop: true },
  { label: "外部载荷顾问", icon: <LoadIcon />, drop: true },
  { label: "连接顾问", icon: <BoltIcon />, drop: true },
  { label: "目标和约束", icon: <TargetIcon />, drop: true },
  { label: "制造控制", icon: <ControlIcon />, drop: true },
  { label: "运行此算例", icon: <RunIcon />, drop: true },
];

const RESULTS: Tool[] = [
  { label: "结果顾问", icon: <ResultIcon />, drop: true },
  { label: "比较结果", icon: <CompareIcon />, narrow: true },
];

const ToolButton = ({ label, icon, narrow, drop }: Tool) => (
  <RibbonItem $narrow={narrow}>
    {icon}
    <RibbonLabel>{label}</RibbonLabel>
    {drop && <Caret />}
  </RibbonItem>
);

const Split = ({ name, icon, dark }: { name: string; icon: ReactNode; dark?: boolean }) => (
  <SplitButton>
    <IconButton aria-label={name}>{icon}</IconButton>
    <DropButton aria-label={`${name}选项`}><Caret color={dark ? "#222" : "#7d7d7d"} /></DropButton>
  </SplitButton>
);

export default function App() {
  return (
    <Page>
      <GlobalStyle />
      <TitleBar>
        <MenuBar>
          <Brand>
            <BrandMark />
            <span><b>SOLID</b>WORKS</span>
          </Brand>
          <MenuList>
            {MENUS.map(([zh, latin]) => (
              <MenuButton key={latin}>{zh}<Latin>{latin}</Latin></MenuButton>
            ))}
          </MenuList>
          <PinButton aria-label="固定菜单"><PinIcon /></PinButton>
        </MenuBar>
        <QuickBar>
          <IconButton aria-label="主页" $after={5}><HomeIcon /></IconButton>
          <Split name="新建" icon={<NewIcon />} />
          <Split name="打开" icon={<OpenIcon />} />
          <Split name="保存" icon={<SaveIcon />} />
          <Split name="打印" icon={<PrintIcon />} dark />
          <Split name="撤销" icon={<UndoIcon />} />
          <Split name="重做" icon={<UndoIcon flip />} />
          <Split name="选择" icon={<CursorIcon />} />
          <IconButton aria-label="重建" $after={4}><RebuildIcon /></IconButton>
          <IconButton aria-label="文件属性" $after={4}><OptionsListIcon /></IconButton>
          <Split name="设置" icon={<GearIcon />} dark />
        </QuickBar>
        <DocTitle>firefly_v2.SLDASM *</DocTitle>
        <SearchBox>
          <PromptIcon />
          <SearchInput placeholder="搜索命令" aria-label="搜索命令" />
        </SearchBox>
      </TitleBar>

      <Ribbon>
        <RibbonGroup $first>
          <ToolButton label="新算例" icon={<StudyIcon />} drop />
        </RibbonGroup>
        <RibbonGroup>
          {ADVISORS.map((tool) => <ToolButton key={tool.label} {...tool} />)}
        </RibbonGroup>
        <RibbonGroup>
          {RESULTS.map((tool) => <ToolButton key={tool.label} {...tool} />)}
          <RibbonStack $tight>
            <RibbonRow>
              <PlotIcon />
              图解工具
              <RowDrop><Caret /></RowDrop>
            </RibbonRow>
          </RibbonStack>
        </RibbonGroup>
        <RibbonGroup $lead>
          <RibbonStack>
            <RibbonRow><ReportIcon />报表</RibbonRow>
            <RibbonRow><ReportImageIcon />为报表包括图像</RibbonRow>
          </RibbonStack>
        </RibbonGroup>
      </Ribbon>

      <Workspace>
        <TabStrip>
          <CommandTab $edge>装配体</CommandTab>
          <CommandTab>布局</CommandTab>
          <CommandTab>草图</CommandTab>
          <CommandTab>标注</CommandTab>
          <CommandTab>评估</CommandTab>
          <CommandTab $wide><Latin $size={14}>SOLIDWORKS </Latin>插件</CommandTab>
          <CommandTab $active><Latin $size={14}>Simulation</Latin></CommandTab>
          <CommandTab><Latin $size={14}>MBD</Latin></CommandTab>
          <ViewBar>
            <IconButton aria-label="整屏显示全图"><ZoomFitIcon /></IconButton>
            <IconButton aria-label="局部放大"><ZoomAreaIcon /></IconButton>
            <IconButton aria-label="上一视图"><PreviousViewIcon /></IconButton>
            <IconButton aria-label="剖面视图"><SectionIcon /></IconButton>
            <IconButton aria-label="动态注解视图"><DynamicIcon /></IconButton>
            <IconButton aria-label="视图定向"><OrientIcon /></IconButton>
            <ViewDrop aria-label="视图定向选项"><Caret color="#999" /></ViewDrop>
            <IconButton aria-label="显示样式"><DisplayIcon /></IconButton>
            <ViewDrop aria-label="显示样式选项"><Caret color="#999" /></ViewDrop>
            <IconButton aria-label="隐藏项目"><EyeIcon /></IconButton>
            <ViewDrop aria-label="隐藏项目选项"><Caret color="#999" /></ViewDrop>
            <IconButton aria-label="编辑外观"><EditAppearanceIcon /></IconButton>
            <IconButton aria-label="应用布景"><SceneIcon /></IconButton>
            <ViewDrop aria-label="应用布景选项"><Caret color="#999" /></ViewDrop>
            <IconButton aria-label="视图设定"><MonitorIcon /></IconButton>
            <ViewDrop aria-label="视图设定选项"><Caret color="#999" /></ViewDrop>
          </ViewBar>
        </TabStrip>

        <Body>
          <Panel>
            <PanelEdge />
            <Grip><Dot /></Grip>
            <ManagerTabs>
              <ManagerTab $edge aria-label="设计树"><PartIcon /></ManagerTab>
              <ManagerTab $active aria-label="属性"><PropertyIcon /></ManagerTab>
              <ManagerTab aria-label="配置"><ConfigIcon /></ManagerTab>
              <ManagerTab aria-label="尺寸"><DimIcon /></ManagerTab>
              <ManagerTab aria-label="外观"><AppearanceIcon /></ManagerTab>
              <TabFill />
            </ManagerTabs>
            <PanelTitle>
              <PanelName>力/扭矩</PanelName>
              <button aria-label="帮助"><HelpIcon /></button>
            </PanelTitle>
            <ActionRow>
              <IconButton aria-label="确定"><OkIcon /></IconButton>
              <IconButton aria-label="取消"><CancelIcon /></IconButton>
              <IconButton aria-label="保持可见"><KeepIcon /></IconButton>
            </ActionRow>
            <SubTabs>
              <SubTab $active>类型</SubTab>
              <SubTab>分割</SubTab>
              <TabFill />
            </SubTabs>

            <Section>
              <SectionHead>
                <SectionName as="span">力/扭矩</SectionName>
                <Chevron up />
              </SectionHead>
              <ModeRow>
                <ModeButton $on><ForceIcon /></ModeButton>
                力
              </ModeRow>
              <ModeRow>
                <ModeButton><TorqueIcon /></ModeButton>
                扭矩
              </ModeRow>
              <SelectionRow>
                <SideIcon><FaceIcon /></SideIcon>
                <ColorBar />
                <SelectionList>
                  <SelectionItem>
                    面<Latin>&lt;1&gt;@</Latin>中层板<Latin>-1</Latin>
                  </SelectionItem>
                </SelectionList>
              </SelectionRow>
              <ListGrip><Dot /></ListGrip>
              <Choice><Radio name="direction" defaultChecked />法向</Choice>
              <Choice><Radio name="direction" />选定的方向</Choice>
              <FieldRow>
                <FieldIcon><RulerIcon /></FieldIcon>
                <Combo>
                  <UnitSelect aria-label="单位" defaultValue="SI"><option>SI</option></UnitSelect>
                  <Chevron thin />
                </Combo>
              </FieldRow>
              <FieldRow>
                <FieldIcon $drop={4}><ForceIcon /></FieldIcon>
                <Combo $strong>
                  <ValueInput id="force" aria-label="力值" defaultValue="1" />
                  <Chevron thin />
                </Combo>
                <Unit>N</Unit>
              </FieldRow>
              <ChoiceGroup>
                <Choice><Check />反向</Choice>
                <Choice><Radio name="basis" defaultChecked />按条目</Choice>
                <Choice $muted><Radio name="basis" disabled />总数</Choice>
              </ChoiceGroup>
            </Section>

            <Section>
              <SectionHead $after={5}>
                <SectionName $shift={4}><Check />非均匀分布</SectionName>
                <Chevron />
              </SectionHead>
            </Section>
            <Section>
              <SectionHead>
                <SectionName as="span">符号设定</SectionName>
                <Chevron />
              </SectionHead>
            </Section>
            <PanelHandle aria-label="折叠面板"><Dot /></PanelHandle>
          </Panel>

          <Viewport>
            <Model />
            <TreeRoot>
              <svg width="16" height="14" viewBox="0 0 16 14" aria-hidden="true">
                <path d="M2 1v7l4-3.500z" fill="#111" />
              </svg>
              <PartIcon />
              {"firefly_v2  (Default..."}
            </TreeRoot>
            <Callout>
              <CalloutName>力值 (N):</CalloutName>
              <CalloutValue defaultValue="1" />
              <LeaderKnob />
            </Callout>
          </Viewport>
        </Body>
      </Workspace>
    </Page>
  );
}
